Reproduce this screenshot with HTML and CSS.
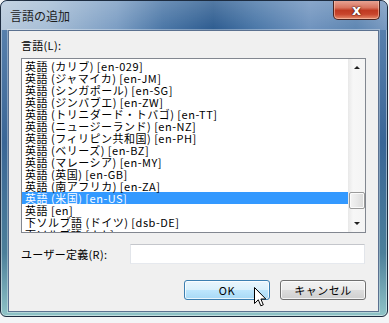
FILE: index.html
```html
<!DOCTYPE html>
<html lang="ja">
  <head>
    <meta charset="UTF-8" />
    <title>言語の追加</title>
    <link rel="stylesheet" href="styles.css">
  </head>
  <body>
    <div class="window">
      <div class="titlebar">
        <span class="title">言語の追加</span>
        <button class="close-btn" type="button">x</button>
      </div>
      <div class="client">
        <div class="field-label">言語(L):</div>
        <div class="listbox">
          <ul class="items">
            <li>英語 (カリブ) [en-029]</li>
            <li>英語 (ジャマイカ) [en-JM]</li>
            <li>英語 (シンガポール) [en-SG]</li>
            <li>英語 (ジンバブエ) [en-ZW]</li>
            <li>英語 (トリニダード・トバゴ) [en-TT]</li>
            <li>英語 (ニュージーランド) [en-NZ]</li>
            <li>英語 (フィリピン共和国) [en-PH]</li>
            <li>英語 (ベリーズ) [en-BZ]</li>
            <li>英語 (マレーシア) [en-MY]</li>
            <li>英語 (英国) [en-GB]</li>
            <li>英語 (南アフリカ) [en-ZA]</li>
            <li class="selected">英語 (米国) [en-US]</li>
            <li>英語 [en]</li>
            <li>下ソルブ語 (ドイツ) [dsb-DE]</li>
            <li>下ソルブ語 [dsb]</li>
          </ul>
          <div class="scrollbar">
            <span class="arrow arrow-up"></span>
            <div class="track">
              <div class="thumb"></div>
            </div>
            <span class="arrow arrow-down"></span>
          </div>
        </div>
        <div class="custom-row">
          <label class="field-label" for="custom">ユーザー定義(R):</label>
          <input id="custom" class="custom-input" type="text" />
        </div>
        <div class="buttons">
          <button class="btn btn-ok" type="button">OK</button>
          <button class="btn" type="button">キャンセル</button>
        </div>
        <!-- mouse pointer resting over the OK button -->
        <svg class="cursor" width="13" height="20" viewBox="0 0 13 20">
          <path d="M0.5 0.5 L0.5 16.5 L4.3 12.8 L6.8 18.8 L9.3 17.8 L6.9 12 L11.8 12 Z"
                fill="#fff" stroke="#000" stroke-width="1" stroke-linejoin="miter" />
        </svg>
      </div>
    </div>
  </body>
</html>
```

FILE: styles.css
```css
body {
  margin: 0;
  width: 389px;
  height: 323px;
  background: #f3f5f7;
  font-family: "Noto Sans CJK JP", "Liberation Sans", sans-serif;
  overflow: hidden;
}
.window {
  position: relative;
  box-sizing: border-box;
  width: 388px;
  height: 317px;
  border: 1px solid #1d2c40;
  border-radius: 7px 7px 6px 6px;
  box-shadow: inset 0 0 0 1px rgba(255, 255, 255, 0.45);
  background: linear-gradient(180deg, #5f86b2 0%, #3a6696 45%, #4c7f9a 80%, #8fc3c7 100%);
  padding: 0 8px 4px 7px;
  overflow: hidden;
}
.titlebar {
  display: flex;
  justify-content: space-between;
  height: 29px;
  margin: 0 -8px 0 -7px;
  padding: 0 7px 0 9px;
  border-radius: 6px 6px 0 0;
  background: linear-gradient(180deg, rgba(255, 255, 255, 0.18) 0, rgba(255, 255, 255, 0) 29px),
    linear-gradient(90deg, #b7c9dc 0%, #a7bed6 12%, #7b9dc3 30%, #4a76a6 42%, #2d5c90 55%, #4a77a8 66%, #6f93be 80%, #5e86b2 92%, #7899c0 100%);
}
.title {
  padding-top: 7px;
  font-size: 12px;
  line-height: 15px;
  color: #1b1b1b;
}
.close-btn {
  align-self: flex-start;
  width: 47px;
  height: 20px;
  margin-top: -1px;
  padding: 0;
  border: 1px solid #4a2420;
  border-top: none;
  border-radius: 0 0 5px 5px;
  box-shadow: inset 0 0 0 1px rgba(255, 210, 190, 0.55);
  background: linear-gradient(180deg, #e9a99a 0%, #d8745f 40%, #c03a22 55%, #c8452c 75%, #e58b6c 100%);
  color: #fff;
  font-family: "DejaVu Sans", sans-serif;
  font-weight: bold;
  font-size: 14px;
  line-height: 16px;
  text-shadow: 0 0 2px #3a1410, 0 0 1px #3a1410;
}
.client {
  position: relative;
  box-sizing: border-box;
  height: 282px;
  border: 1px solid #5b7190;
  box-shadow: 0 0 0 1px rgba(255, 255, 255, 0.35);
  background: #f0f0f0;
  padding: 8px 12px 0 12px;
}
.field-label {
  display: block;
  font-size: 11px;
  line-height: 13px;
  letter-spacing: 0.3px;
  color: #000;
}
.listbox {
  display: flex;
  height: 175px;
  box-sizing: border-box;
  margin-top: 6px;
  border: 1px solid #828790;
  background: #fff;
  overflow: hidden;
}
.items {
  flex: 1;
  list-style: none;
  margin: 0;
  padding: 1px 0 0 0;
  overflow: hidden;
}
.items li {
  height: 12px;
  padding-left: 3px;
  font-size: 11px;
  line-height: 12px;
  letter-spacing: 0.5px;
  white-space: nowrap;
  color: #000;
}
.items li.selected {
  background: #3399ff;
  color: #fff;
}
.scrollbar {
  display: flex;
  flex-direction: column;
  width: 17px;
  background: linear-gradient(90deg, #e8e8e8 0%, #f7f7f7 30%, #f4f4f4 100%);
}
.arrow {
  height: 17px;
  display: flex;
  align-items: center;
  justify-content: center;
}
.arrow::before {
  content: "";
  border-left: 3px solid transparent;
  border-right: 3px solid transparent;
}
.arrow-up::before {
  border-bottom: 3px solid #202020;
}
.arrow-down::before {
  border-top: 3px solid #202020;
}
.track {
  flex: 1;
  display: flex;
  flex-direction: column;
  justify-content: flex-end;
  padding-bottom: 6px;
}
.thumb {
  height: 15px;
  margin: 0 0 0 1px;
  border: 1px solid #9a9a9a;
  border-radius: 2px;
  box-shadow: inset 0 0 0 1px #fbfbfb;
  background: linear-gradient(90deg, #f3f3f3 0%, #e8e8e8 50%, #d9d9d9 100%);
}
.custom-row {
  display: flex;
  align-items: center;
  margin-top: 11px;
  height: 20px;
}
.custom-row .field-label {
  width: 109px;
}
.custom-input {
  box-sizing: border-box;
  width: 235px;
  height: 20px;
  margin: 0;
  border: 1px solid;
  border-color: #c4c6cb #e2e5ea #e6e9ee #e2e5ea;
  background: #fff;
}
.buttons {
  display: flex;
  justify-content: flex-end;
  gap: 10px;
  margin-top: 16px;
}
.btn {
  box-sizing: border-box;
  width: 86px;
  height: 20px;
  padding: 0;
  border: 1px solid #707070;
  border-radius: 3px;
  box-shadow: inset 0 0 0 1px rgba(255, 255, 255, 0.75);
  background: linear-gradient(180deg, #f2f2f2 0%, #ebebeb 50%, #dddddd 50%, #cfcfcf 100%);
  font-family: "Noto Sans CJK JP", sans-serif;
  font-size: 11px;
  line-height: 16px;
  letter-spacing: 0.5px;
  color: #000;
}
.btn-ok {
  border-color: #3c7fb1;
  background: linear-gradient(180deg, #eaf6fd 0%, #d9f0fc 50%, #bee6fd 50%, #a7d9f5 100%);
}
.cursor {
  position: absolute;
  left: 245px;
  top: 256px;
}
```
